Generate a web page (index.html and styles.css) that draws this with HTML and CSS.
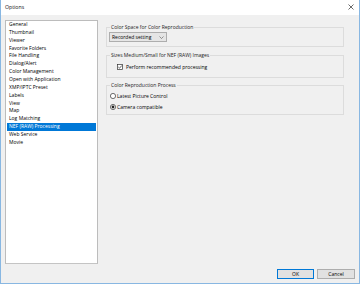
FILE: index.html
```html
<!DOCTYPE html>
<html>
<head>
<meta charset="utf-8">
<link rel="stylesheet" href="styles.css">
</head>
<body>
<div class="window">
  <div class="titlebar">
    <span class="title">Options</span>
    <svg class="close" width="6" height="6" viewBox="0 0 6 6"><path d="M0.5 0.5 L5.5 5.5 M5.5 0.5 L0.5 5.5" stroke="#444" stroke-width="0.8" fill="none"/></svg>
  </div>
  <div class="content">
    <div class="main">
      <ul class="list">
        <li>General</li>
        <li>Thumbnail</li>
        <li>Viewer</li>
        <li>Favorite Folders</li>
        <li>File Handling</li>
        <li>Dialog/Alert</li>
        <li>Color Management</li>
        <li>Open with Application</li>
        <li>XMP/IPTC Preset</li>
        <li>Labels</li>
        <li>View</li>
        <li>Map</li>
        <li>Log Matching</li>
        <li class="selected">NEF (RAW) Processing</li>
        <li>Web Service</li>
        <li>Movie</li>
      </ul>
      <div class="pane">
        <fieldset class="group g1">
          <legend>Color Space for Color Reproduction</legend>
          <div class="combo"><span>Recorded setting</span>
            <svg class="chev" width="5" height="3" viewBox="0 0 5 3"><path d="M0.5 0.5 L2.5 2.5 L4.5 0.5" stroke="#555" stroke-width="0.6" fill="none"/></svg>
          </div>
        </fieldset>
        <fieldset class="group g2">
          <legend>Sizes Medium/Small for NEF (RAW) Images</legend>
          <div class="row check-row">
            <svg class="box" width="6" height="6" viewBox="0 0 6 6"><rect x="0.5" y="0.5" width="5" height="5" fill="#fff" stroke="#333" stroke-width="0.7"/><path d="M1.3 3 L2.5 4.2 L4.8 1.5" stroke="#222" stroke-width="0.7" fill="none"/></svg>
            <span>Perform recommended processing</span>
          </div>
        </fieldset>
        <fieldset class="group g3">
          <legend>Color Reproduction Process</legend>
          <div class="row radio-row">
            <svg class="radio" width="6" height="6" viewBox="0 0 6 6"><circle cx="3" cy="3" r="2.6" fill="#fff" stroke="#333" stroke-width="0.7"/></svg>
            <span>Latest Picture Control</span>
          </div>
          <div class="row radio-row">
            <svg class="radio" width="6" height="6" viewBox="0 0 6 6"><circle cx="3" cy="3" r="2.6" fill="#fff" stroke="#333" stroke-width="0.7"/><circle cx="3" cy="3" r="1.4" fill="#222"/></svg>
            <span>Camera compatible</span>
          </div>
        </fieldset>
      </div>
    </div>
    <div class="footer">
      <div class="btn default">OK</div>
      <div class="btn">Cancel</div>
    </div>
  </div>
</div>
</body>
</html>
```
FILE: styles.css
```css
html, body {
  margin: 0;
  padding: 0;
}
body {
  width: 360px;
  height: 284px;
  overflow: hidden;
  font-family: "Open Sans", "Noto Sans", sans-serif;
  font-size: 5px;
  color: #000;
}
.window {
  width: 360px;
  height: 284px;
  box-sizing: border-box;
  border-left: 1px solid #88b7e2;
  border-right: 1px solid #88b7e2;
  border-bottom: 1px solid #88b7e2;
  background: #f0f0f0;
  display: flex;
  flex-direction: column;
}
.titlebar {
  height: 15px;
  background: #fff;
  display: flex;
  align-items: center;
  justify-content: space-between;
  padding: 0 5px 2px 4px;
  box-sizing: border-box;
  font-size: 5.2px;
}
.title {
  color: #111;
}
.close {
  display: block;
}
.content {
  flex: 1;
  display: flex;
  flex-direction: column;
  padding: 5px 4px 4px 4px;
}
.main {
  height: 244px;
  display: flex;
  gap: 8px;
}
.list {
  list-style: none;
  margin: 0;
  padding: 0 1px;
  width: 93px;
  box-sizing: border-box;
  background: #fff;
  border: 1px solid #bcbcbc;
  border-bottom-color: #c4c4c4;
}
.list li {
  height: 7.87px;
  line-height: 7.87px;
  padding-left: 2px;
  white-space: nowrap;
}
.list li.selected {
  background: #0078d7;
  color: #fff;
}
.pane {
  width: 238px;
  display: flex;
  flex-direction: column;
  padding-top: 4px;
}
.group {
  margin: 0;
  border: 1px solid #dcdcdc;
  padding: 0 2px;
  min-width: 0;
}
.group legend {
  padding: 0 1px;
  margin-left: 1px;
  line-height: 6px;
  color: #222;
}
.g1 {
  padding-top: 2px;
  padding-bottom: 4px;
}
.g2 {
  margin-top: 5px;
  padding-top: 4px;
  padding-bottom: 6px;
}
.g3 {
  margin-top: 4px;
  padding-top: 3px;
  padding-bottom: 3px;
}
.combo {
  width: 58px;
  height: 10px;
  box-sizing: border-box;
  background: #e5e5e5;
  border: 1px solid #adadad;
  display: flex;
  align-items: center;
  justify-content: space-between;
  padding: 0 2px 0 2px;
}
.chev {
  display: block;
}
.row {
  display: flex;
  align-items: center;
  height: 9px;
}
.check-row {
  padding-left: 8px;
  gap: 3px;
}
.radio-row {
  padding-left: 1px;
  gap: 1px;
}
.radio-row + .radio-row {
  margin-top: 2px;
}
.box, .radio {
  display: block;
}
.footer {
  margin-top: 5px;
  height: 10px;
  display: flex;
  justify-content: flex-end;
  gap: 3px;
}
.btn {
  width: 38px;
  height: 10px;
  box-sizing: border-box;
  background: #e1e1e1;
  border: 1px solid #adadad;
  display: flex;
  align-items: center;
  justify-content: center;
}
.btn.default {
  border-color: #0078d7;
  width: 37px;
}
```
